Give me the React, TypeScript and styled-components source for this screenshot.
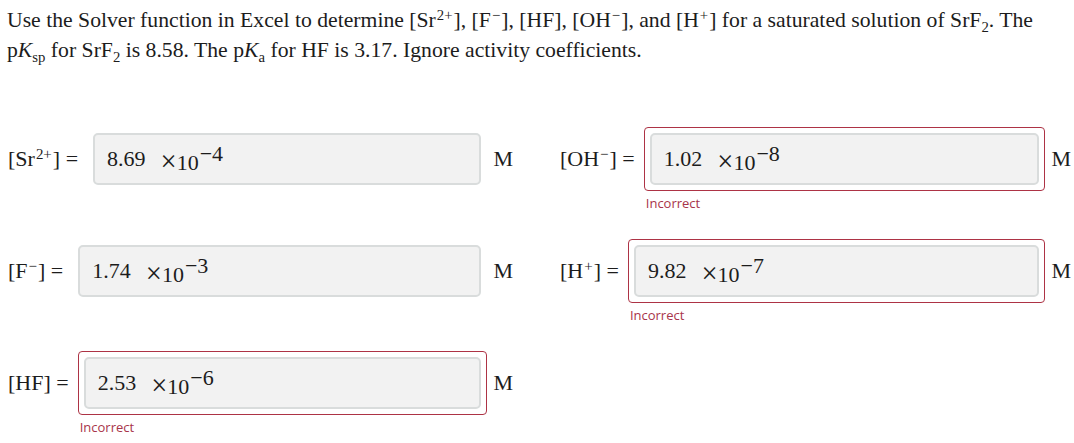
import React from "react";
import styled, { createGlobalStyle } from "styled-components";

const GlobalStyle = createGlobalStyle`
  html, body {
    margin: 0;
    padding: 0;
    background: #ffffff;
  }
  body {
    font-family: "Liberation Serif", "Times New Roman", serif;
    color: #1c1c1c;
  }
`;

const Page = styled.div`
  width: 1074px;
  box-sizing: border-box;
  padding: 5px 0 0 7px;
`;

const Prompt = styled.p`
  margin: 0;
  font-size: 21.7px;
  line-height: 30px;
`;

const Sup = styled.sup`
  font-size: 0.68em;
  line-height: 0;
  vertical-align: 0.48em;
  margin: 0 1px;
`;

const Sub = styled.sub`
  font-size: 0.68em;
  line-height: 0;
  vertical-align: -0.32em;
`;

const Italic = styled.i`
  font-style: italic;
`;

const Answers = styled.div`
  display: grid;
  grid-template-columns: 505px 511px;
  column-gap: 47px;
  row-gap: 27px;
  margin-top: 62px;
  padding-left: 1px;
`;

const Field = styled.div`
  display: grid;
  grid-template-columns: auto 1fr auto;
  grid-template-rows: 64px 18px;
  row-gap: 3px;
  align-items: center;
`;

const Label = styled.span`
  font-size: 22px;
  white-space: nowrap;
  margin-right: 9px;
`;

const Frame = styled.div<{ $incorrect?: boolean }>`
  box-sizing: border-box;
  height: 64px;
  padding: 5px;
  border: 1px solid ${(p) => (p.$incorrect ? "#ad3345" : "transparent")};
  border-radius: 4px;
`;

const ValueBox = styled.div`
  box-sizing: border-box;
  height: 52px;
  display: flex;
  align-items: center;
  padding-left: 12px;
  background: #f2f2f2;
  border: 2px solid #d9dcdc;
  border-radius: 5px;
  font-size: 22px;
  white-space: nowrap;
`;

const Times = styled.span`
  margin-left: 15px;
`;

const Cross = styled.span`
  font-size: 1.3em;
  line-height: 0;
  vertical-align: -1px;
`;

const Exponent = styled.span`
  display: inline-block;
  vertical-align: 0.42em;
  margin-left: 1px;
`;

const Unit = styled.span`
  font-size: 22px;
  margin-left: 6px;
`;

const Feedback = styled.div`
  grid-column: 2;
  padding-left: 2px;
  font-family: "Open Sans", "Liberation Sans", sans-serif;
  font-size: 13px;
  line-height: 18px;
  color: #a8344a;
`;

type Answer = {
  label: React.ReactNode;
  mantissa: string;
  exponent: string;
  incorrect: boolean;
};

const answers: Answer[] = [
  {
    label: (
      <>
        [Sr<Sup>2+</Sup>] =
      </>
    ),
    mantissa: "8.69",
    exponent: "−4",
    incorrect: false,
  },
  {
    label: (
      <>
        [OH<Sup>−</Sup>] =
      </>
    ),
    mantissa: "1.02",
    exponent: "−8",
    incorrect: true,
  },
  {
    label: (
      <>
        [F<Sup>−</Sup>] =
      </>
    ),
    mantissa: "1.74",
    exponent: "−3",
    incorrect: false,
  },
  {
    label: (
      <>
        [H<Sup>+</Sup>] =
      </>
    ),
    mantissa: "9.82",
    exponent: "−7",
    incorrect: true,
  },
  {
    label: <>[HF] =</>,
    mantissa: "2.53",
    exponent: "−6",
    incorrect: true,
  },
];

export default function App() {
  return (
    <>
      <GlobalStyle />
      <Page>
        <Prompt>
          Use the Solver function in Excel to determine [Sr<Sup>2+</Sup>], [F<Sup>−</Sup>], [HF],
          [OH<Sup>−</Sup>], and [H<Sup>+</Sup>] for a saturated solution of SrF<Sub>2</Sub>. The
          <br />
          p<Italic>K</Italic>
          <Sub>sp</Sub> for SrF<Sub>2</Sub> is 8.58. The p<Italic>K</Italic>
          <Sub>a</Sub> for HF is 3.17. Ignore activity coefficients.
        </Prompt>
        <Answers>
          {answers.map((a, i) => (
            <Field key={i}>
              <Label>{a.label}</Label>
              <Frame $incorrect={a.incorrect}>
                <ValueBox>
                  {a.mantissa}
                  <Times>
                    <Cross>×</Cross>10<Exponent>{a.exponent}</Exponent>
                  </Times>
                </ValueBox>
              </Frame>
              <Unit>M</Unit>
              {a.incorrect && <Feedback>Incorrect</Feedback>}
            </Field>
          ))}
        </Answers>
      </Page>
    </>
  );
}
